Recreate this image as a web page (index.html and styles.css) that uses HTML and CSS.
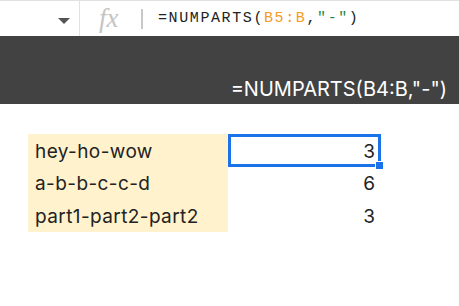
FILE: index.html
```html
<!DOCTYPE html>
<html lang="en">
<head>
    <meta charset="UTF-8">
    <title>NUMPARTS</title>
    <link rel="stylesheet" href="styles.css">
</head>
<body>
    <div class="formula-bar">
        <div class="name-box"><span class="caret"></span></div>
        <div class="fx">fx</div>
        <div class="bar-sep"></div>
        <div class="formula">=NUMPARTS(<span class="ref">B5:B</span>,<span class="str">"-"</span>)</div>
    </div>

    <div class="banner">=NUMPARTS(B4:B,"-")</div>

    <div class="sheet">
        <div class="cell text">hey-ho-wow</div>
        <div class="cell num selected">3<span class="handle"></span></div>
        <div class="cell text">a-b-b-c-c-d</div>
        <div class="cell num">6</div>
        <div class="cell text">part1-part2-part2</div>
        <div class="cell num">3</div>
    </div>
</body>
</html>
```

FILE: styles.css
```css
body {
    margin: 0;
    background: #fff;
    font-family: Inter, sans-serif;
}
.formula-bar {
    display: flex;
    align-items: center;
    height: 35px;
    border-top: 1px solid #e2e2e2;
}
.name-box {
    width: 79px;
    height: 35px;
    border-right: 1px solid #e2e2e2;
    position: relative;
}
.caret {
    position: absolute;
    left: 58px;
    top: 17px;
    width: 0;
    height: 0;
    border-left: 6px solid transparent;
    border-right: 6px solid transparent;
    border-top: 6px solid #555;
}
.fx {
    margin-left: 19px;
    width: 32px;
    font-family: "Liberation Serif", serif;
    font-style: italic;
    font-size: 27px;
    color: #c4c4c4;
}
.bar-sep {
    margin-left: 10px;
    width: 2px;
    height: 20px;
    background: #c8c8c8;
}
.formula {
    margin-left: 15px;
    font-family: "Liberation Mono", monospace;
    font-size: 15px;
    letter-spacing: 1.6px;
    color: #222;
}
.ref {
    color: #f39c1f;
}
.str {
    color: #1c8a3c;
}
.banner {
    height: 68px;
    background: #424242;
    color: #fff;
    font-size: 20px;
    display: flex;
    justify-content: flex-end;
    align-items: flex-end;
    padding-right: 12px;
    padding-bottom: 3px;
    box-sizing: border-box;
}
.sheet {
    display: grid;
    grid-template-columns: 200px 153px;
    grid-auto-rows: 32.5px;
    margin: 30px 0 0 28px;
    font-size: 19px;
    letter-spacing: 0.4px;
    color: #222;
}
.cell {
    display: flex;
    align-items: center;
    padding-top: 2px;
}
.text {
    background: #fff2cc;
    padding-left: 7px;
}
.num {
    justify-content: flex-end;
    padding-right: 6px;
    letter-spacing: 0;
    position: relative;
}
.selected {
    box-shadow: inset 0 0 0 3px #1a73e8;
}
.handle {
    position: absolute;
    right: -3px;
    bottom: -3px;
    width: 9px;
    height: 9px;
    background: #1a73e8;
    border: 1px solid #fff;
    box-sizing: border-box;
}
```
